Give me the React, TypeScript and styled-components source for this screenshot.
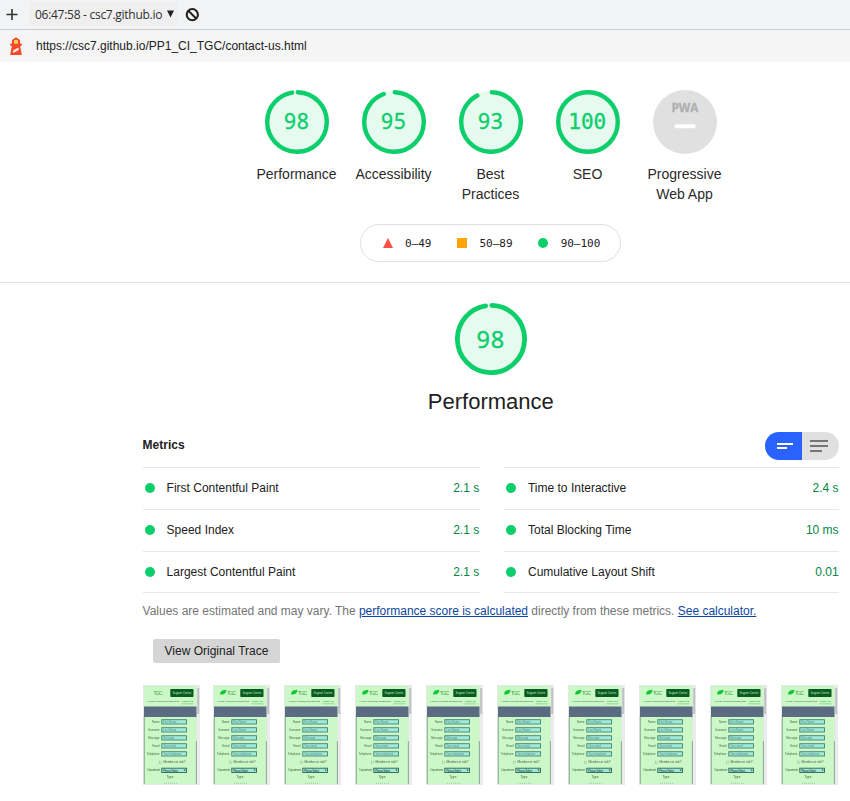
import React from "react";
import styled, { createGlobalStyle } from "styled-components";

const GlobalStyle = createGlobalStyle`
  * { box-sizing: border-box; }
  body {
    margin: 0;
    background: #fff;
    color: #212121;
    font-family: "Liberation Sans", Arial, sans-serif;
    font-size: 12px;
    overflow: hidden;
  }
`;

const Page = styled.div`
  width: 850px;
  height: 801px;
  overflow: hidden;
`;

const Toolbar = styled.div`
  display: flex;
  align-items: center;
  height: 30px;
  padding-left: 6px;
  background: #f1f3f4;
  border-bottom: 1px solid #cacdd1;
`;

const ReportSelect = styled.div`
  display: flex;
  align-items: center;
  gap: 5px;
  width: 148px;
  height: 24px;
  margin: 0 8px 1px 11px;
  padding-left: 6px;
  background: #efefef;
  color: #303030;
  font: 12px "Open Sans", "Noto Sans", sans-serif;
  letter-spacing: -0.28px;
  white-space: nowrap;
`;

const UrlBar = styled.div`
  display: flex;
  align-items: center;
  gap: 13px;
  height: 32px;
  padding-left: 9px;
  background: #f5f5f5;
  color: #212121;
`;

const Scores = styled.div`
  display: flex;
  justify-content: center;
  height: 134px;
  margin-top: 28px;
  padding-left: 131px;
`;

const ScoreItem = styled.div`
  display: flex;
  flex-direction: column;
  align-items: center;
  width: 97px;
  font-size: 14px;
  line-height: 20px;
  text-align: center;
  color: #2a2a2a;
`;

const ScoreLabel = styled.div`
  width: 88px;
  margin-top: 10px;
`;

const GaugeSvg = styled.svg`
  display: block;
  flex: none;
`;

const GaugeNumber = styled.text<{ $size: number; $slashed: boolean }>`
  font-family: ${(p) => (p.$slashed ? '"DejaVu Sans Mono", monospace' : '"Noto Sans", "Open Sans", sans-serif')};
  font-size: ${(p) => p.$size}px;
  letter-spacing: ${(p) => (p.$slashed ? 0 : 0.9)}px;
  fill: #0cce6b;
  stroke: #0cce6b;
  stroke-width: 0.35px;
  text-anchor: middle;
`;

const PwaText = styled.text`
  font: bold 12px "Open Sans", "Noto Sans", sans-serif;
  fill: #b0b0b0;
  stroke: #b0b0b0;
  stroke-width: 0.3px;
`;

const Legend = styled.div`
  display: flex;
  align-items: center;
  width: 261px;
  height: 38px;
  margin: 0 0 20px 360px;
  padding-left: 22px;
  border: 1px solid #e0e0e0;
  border-radius: 19px;
  font: 11px "DejaVu Sans Mono", monospace;
`;

const LegendItem = styled.div<{ $after: number; $gap: number }>`
  display: flex;
  align-items: center;
  gap: ${(p) => p.$gap}px;
  margin-right: ${(p) => p.$after}px;
`;

const Category = styled.section`
  display: flex;
  flex-direction: column;
  border-top: 1px solid #e0e0e0;
  padding: 20px 11px 0 142.6px;
`;

const CategoryHead = styled.div`
  display: flex;
  flex-direction: column;
  align-items: center;
  height: 129px;
`;

const CategoryTitle = styled.div`
  margin-top: 13px;
  font-size: 22px;
  line-height: 28px;
`;

const MetricsHead = styled.div`
  display: flex;
  align-items: center;
  justify-content: space-between;
  height: 28px;
  margin-bottom: 7px;
`;

const MetricsTitle = styled.div`
  font-weight: bold;
  padding-bottom: 3px;
`;

const Toggle = styled.div`
  display: flex;
  width: 74px;
  height: 28px;
  border-radius: 14px;
  overflow: hidden;
`;

const ToggleHalf = styled.div<{ $on?: boolean }>`
  width: 37px;
  height: 28px;
  background: ${(p) => (p.$on ? "#2962ff" : "#e0e0e0")};
`;

const Metrics = styled.div`
  display: grid;
  grid-template-columns: 337px 335px;
  column-gap: 24.4px;
`;

const MetricColumn = styled.div`
  border-bottom: 1px solid #e8e8e8;
`;

const Metric = styled.div<{ $short?: boolean }>`
  display: flex;
  align-items: center;
  height: ${(p) => (p.$short ? 41 : 42)}px;
  border-top: 1px solid #e8e8e8;
  padding: 0 0 ${(p) => (p.$short ? 0 : 2)}px 2px;
`;

const Dot = styled.span<{ $short?: boolean }>`
  width: 10px;
  height: 10px;
  margin: ${(p) => (p.$short ? "0 12px 1px 0" : "1px 12px 0 0")};
  border-radius: 50%;
  background: #0cce6b;
`;

const MetricValue = styled.span`
  margin: 0 0.4px 0 auto;
  color: #018642;
`;

const Note = styled.div`
  margin-top: 10px;
  line-height: 16px;
  color: #757575;
  letter-spacing: -0.011px;
  white-space: nowrap;
`;

const NoteLink = styled.a`
  color: #0d47a1;
  text-decoration: underline;
`;

const TraceButton = styled.button`
  width: 127px;
  height: 24px;
  margin: 20px 0 22px 10.4px;
  padding: 0;
  border: 0;
  border-radius: 2px;
  background: #d5d5d5;
  color: #212121;
  font: 12px "Liberation Sans", Arial, sans-serif;
`;

const Filmstrip = styled.div`
  display: flex;
  gap: 13.9px;
`;

const FrameSvg = styled.svg`
  display: block;
  flex: none;
  font-family: "Liberation Sans", Arial, sans-serif;
`;

const FrameContent = styled.g`
  filter: blur(0.4px);
`;

function Gauge({ score, size }: { score: number; size: number }) {
  const stroke = size === 64 ? 4.4 : 4.8;
  const r = size / 2 - stroke / 2;
  const c = 2 * Math.PI * r;
  const full = score === 100;
  return (
    <GaugeSvg width={size} height={size}>
      <circle cx={size / 2} cy={size / 2} r={size / 2 - 0.5} fill="#e6faf0" />
      <circle
        cx={size / 2}
        cy={size / 2}
        r={r}
        fill="none"
        stroke="#0cce6b"
        strokeWidth={stroke}
        strokeLinecap="round"
        strokeDasharray={full ? undefined : `${(c * score) / 100 - stroke / 2} ${c}`}
        transform={`rotate(${full ? -90 : -88.5} ${size / 2} ${size / 2})`}
      />
      <GaugeNumber
        $size={size === 64 ? 21 : 23.5}
        $slashed={full}
        x={size / 2 - (full ? 0.7 : 0.2)}
        y={size / 2 + (size === 64 ? 7.2 : 8.8)}
      >
        {score}
      </GaugeNumber>
    </GaugeSvg>
  );
}

function PwaBadge() {
  return (
    <GaugeSvg width="64" height="64">
      <circle cx="32" cy="32" r="32" fill="#e0e0e0" />
      <PwaText x="18.4" y="22.3" textLength="27" lengthAdjust="spacingAndGlyphs">
        PWA
      </PwaText>
      <path d="M23.3 36.2h17.4" stroke="#fff" strokeWidth="4" strokeLinecap="round" />
    </GaugeSvg>
  );
}

function Lighthouse() {
  return (
    <svg width="14" height="20" viewBox="0 0 14 20">
      <path d="M3 4 7 1.2 11 4v3.5h1.6V10h-1.4l1.6 9H1.2l1.6-9H1.4V7.5H3z" fill="#f4492b" />
      <path d="M5 4.6 7 3.4l2 1.2v3.2H5z" fill="#ffcf52" />
      <path d="m4.4 14.2 5-2.6.5 2.4-5.9 3z" fill="#fff0e9" />
    </svg>
  );
}

const fields = ["Name:", "Surname:", "Message:", "Email:", "Telephone:"];
const values = ["First Name", "Last Name", "Message", "Your email", "Your telephone"];

function Frame({ first }: { first: boolean }) {
  return (
    <FrameSvg width="57" height="100" viewBox="0 0 57 100">
      <path d="M0 0h57v100H0z" fill="#e5e9e5" />
      <path d="M1 1h52.5v98H1z" fill="#ccf7c6" />
      <path d="M54 1h2.5v98H54z" fill="#ececef" />
      <path d="M54.2 3h2v26h-2z" fill="#bfc2c4" />
      <FrameContent>
        <path d="M1 21.5h52.5V32H1z" fill="#596c82" />
        <path d="M53.4 56v43M1.3 32v67" stroke="#6b8a80" strokeWidth=".7" />
        {!first && <path d="M7.2 9.6C7 6.6 9 5 13.4 4.8c0 3.2-1.6 4.8-5 4.8z" fill="#0fc733" />}
        <text x={first ? 10.5 : 14} y="9.6" fontSize="5" textLength="9" fill="#43a34a">TGC</text>
        <rect x="27.3" y="4" width="23.2" height="8" rx=".7" fill="#085c20" />
        <text x="29.4" y="9.1" fontSize="3.1" textLength="19" fill="#b9dcbd">Support Centre</text>
        <text x="4.5" y="16.6" fontSize="2.4" textLength="31.5" fill="#4a744f">HOME ARTICLES QUESTIONS</text>
        <text x="39" y="16.6" fontSize="2.4" textLength="11" fill="#10a52d">CONTACT</text>
        <path d="M38.5 18.8h12" stroke="#79bf79" strokeWidth=".6" />
        {fields.map((label, i) => (
          <g key={label}>
            <text x="17" y={37.8 + i * 8} fontSize="2.7" textAnchor="end" fill="#456845">{label}</text>
            <rect x="18.8" y={34.7 + i * 8} width="24.7" height="4.3" fill="#a0ead8" stroke="#458373" strokeWidth=".9" />
            <text x="20.3" y={37.9 + i * 8} fontSize="2.7" fill="#528c80">{values[i]}</text>
          </g>
        ))}
        <rect x="16.5" y="76.2" width="2.1" height="2.1" fill="#e5fbe4" stroke="#8eb090" strokeWidth=".5" />
        <text x="20.5" y="78.4" fontSize="3.1" textLength="22" fill="#456345">Member at risk?</text>
        <text x="17.5" y="86.4" fontSize="2.7" textLength="13" textAnchor="end" fill="#456845">Department:</text>
        <rect x="18.8" y="83.2" width="24.7" height="4.3" fill="#a0ead8" stroke="#2e6254" strokeWidth=".9" />
        <text x="20.3" y="86.5" fontSize="3" textLength="15" fill="#123f38">Please Select</text>
        <path d="m40.6 84.6 1 1.6 1-1.6z" fill="#24534c" />
        <text x="23.5" y="93" fontSize="3.2" fill="#456345">Type</text>
        <path d="M21 98.3h13" stroke="#81a983" strokeWidth=".6" strokeDasharray="1 1" />
      </FrameContent>
    </FrameSvg>
  );
}

const left = [["First Contentful Paint", "2.1 s"], ["Speed Index", "2.1 s"], ["Largest Contentful Paint", "2.1 s"]];
const right = [["Time to Interactive", "2.4 s"], ["Total Blocking Time", "10 ms"], ["Cumulative Layout Shift", "0.01"]];
const scores: [string, number][] = [["Performance", 98], ["Accessibility", 95], ["Best Practices", 93], ["SEO", 100]];

export default function App() {
  return (
    <Page>
      <GlobalStyle />
      <Toolbar>
        <svg width="12" height="12" viewBox="0 0 12 12">
          <path d="M6 0v11M.5 5.5h11" stroke="#333" strokeWidth="1.6" />
        </svg>
        <ReportSelect>
          06:47:58 - csc7.github.io
          <svg width="7" height="8" viewBox="0 0 7 8"><path d="M0 .5h7L3.5 7.5z" fill="#222" /></svg>
        </ReportSelect>
        <svg width="14" height="14" viewBox="0 0 14 14">
          <circle cx="7.3" cy="6.7" r="5.6" fill="none" stroke="#1d1d1d" strokeWidth="2" />
          <path d="m3.5 2.9 7.6 7.6" stroke="#1d1d1d" strokeWidth="2" />
        </svg>
      </Toolbar>
      <UrlBar>
        <Lighthouse />
        https://csc7.github.io/PP1_CI_TGC/contact-us.html
      </UrlBar>

      <Scores>
        {scores.map(([label, score]) => (
          <ScoreItem key={label}>
            <Gauge score={score} size={64} />
            <ScoreLabel>{label}</ScoreLabel>
          </ScoreItem>
        ))}
        <ScoreItem>
          <PwaBadge />
          <ScoreLabel>Progressive Web App</ScoreLabel>
        </ScoreItem>
      </Scores>

      <Legend>
        <LegendItem $gap={12} $after={25}>
          <svg width="10" height="10"><path d="M5 0l5 10H0z" fill="#ff4e42" /></svg>0–49
        </LegendItem>
        <LegendItem $gap={13} $after={25}>
          <svg width="10" height="10"><path d="M0 0h10v10H0z" fill="#ffa400" /></svg>50–89
        </LegendItem>
        <LegendItem $gap={13} $after={0}>
          <svg width="10" height="10"><circle cx="5" cy="5" r="5" fill="#0cce6b" /></svg>90–100
        </LegendItem>
      </Legend>

      <Category>
        <CategoryHead>
          <Gauge score={98} size={72} />
          <CategoryTitle>Performance</CategoryTitle>
        </CategoryHead>
        <MetricsHead>
          <MetricsTitle>Metrics</MetricsTitle>
          <Toggle>
            <ToggleHalf $on>
              <svg width="37" height="28"><path d="M12 11h16v2H12zM12 15h10v2H12z" fill="#fff" /></svg>
            </ToggleHalf>
            <ToggleHalf>
              <svg width="37" height="28"><path d="M8 8h18v2H8zM8 13h18v2H8zM8 18h12v2H8z" fill="#757575" /></svg>
            </ToggleHalf>
          </Toggle>
        </MetricsHead>
        <Metrics>
          {[left, right].map((column, c) => (
            <MetricColumn key={c}>
              {column.map(([name, value], i) => (
                <Metric key={name} $short={i === 2}>
                  <Dot $short={i === 2} />
                  {name}
                  <MetricValue>{value}</MetricValue>
                </Metric>
              ))}
            </MetricColumn>
          ))}
        </Metrics>
        <Note>
          Values are estimated and may vary. The <NoteLink>performance score is calculated</NoteLink> directly from these
          metrics. <NoteLink>See calculator.</NoteLink>
        </Note>
        <TraceButton>View Original Trace</TraceButton>
        <Filmstrip>
          {Array.from({ length: 10 }, (_, i) => (
            <Frame key={i} first={i === 0} />
          ))}
        </Filmstrip>
      </Category>
    </Page>
  );
}
